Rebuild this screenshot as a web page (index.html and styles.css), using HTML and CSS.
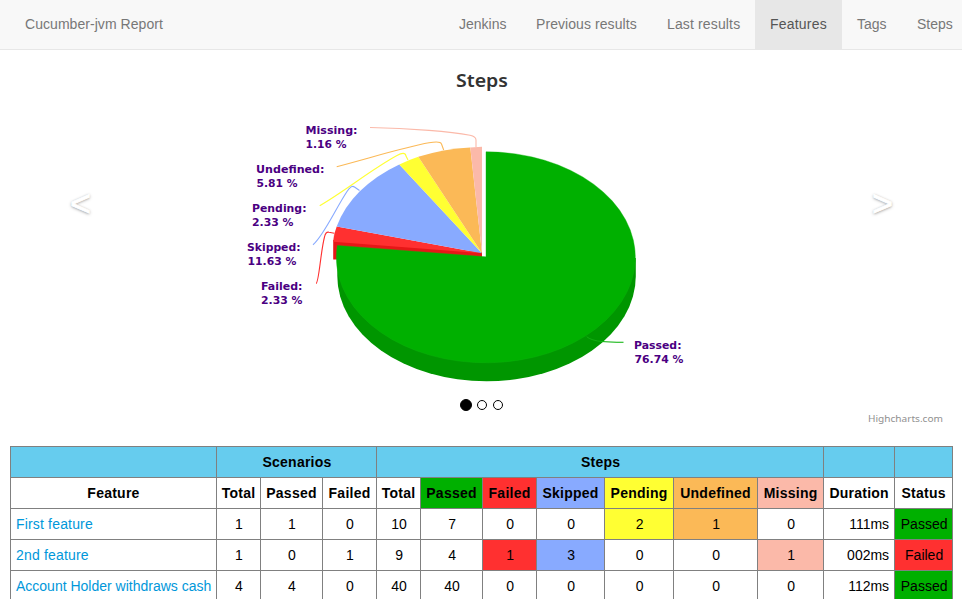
FILE: index.html
```html
<!DOCTYPE html>
<html lang="en">
<head>
<meta charset="utf-8">
<title>Cucumber-jvm Report</title>
<link rel="stylesheet" href="styles.css">
</head>
<body>
<nav class="navbar">
  <a class="brand">Cucumber-jvm Report</a>
  <div class="links">
    <a class="jenkins">Jenkins</a><a class="previous">Previous results</a><a class="last">Last results</a><a class="features active">Features</a><a class="tags">Tags</a><a>Steps</a>
  </div>
</nav>
<section class="carousel">
  <svg class="chart" viewBox="0 50 962 386" width="962" height="386">
    <text class="title" x="456" y="87" textLength="52" lengthAdjust="spacingAndGlyphs">Steps</text>
    <g>
      <path fill="#e61717" d="M333.2 234V259.5H345L482 257V252L333.5 240Z"/>
      <path fill="#ff3030" d="M482 253.3L333.3 241.7Q333.7 234 336.7 226.6Z"/>
      <path fill="#88aaff" d="M482 253.3L336.7 226.6A149.5 106 0 0 1 399.3 164.4Z"/>
      <path fill="#ffff33" d="M482 253.3L399.3 164.4A149.5 106 0 0 1 418.3 156.8Z"/>
      <path fill="#fbb957" d="M482 253.3L418.3 156.8A149.5 106 0 0 1 470.3 147.4Z"/>
      <path fill="#fbb9a9" d="M482 253.3L470.3 147.4L482 146.8Z"/>
      <path fill="#009600" d="M337.3 258V276A149.25 105.3 0 0 0 635.8 276V258Z"/>
      <path fill="#00b000" stroke="#0cb40c" stroke-width=".4" d="M486 256.8L337.3 245.4A149.5 105.5 0 1 0 486 151.8Z"/>
    </g>
    <g class="connectors">
      <path stroke="#fbb9a9" d="M370 127.5C412 128 452 132 470 135.2Q476 136.5 476 140V147"/>
      <path stroke="#fbb957" d="M336.7 166.7C370 158 405 147 429 142.8Q440.5 140.8 441.5 144L443.7 150"/>
      <path stroke="#ffff33" d="M319.7 205.7C345 191 372 169 397 155.5Q405 151 406 156L408 160"/>
      <path stroke="#88aaff" d="M313 244.7C323 237 336 208 347 191.5Q351.5 184.5 354.5 187L359.5 190.5"/>
      <path stroke="#ff3030" d="M316 283.5C319 283 320.5 252 324.5 237Q325.6 231.4 329 232.2L334.3 233.3"/>
      <path stroke="#00b000" d="M623.5 342.3Q609 342.3 601 341.5"/>
      <path stroke="#1ab81a" stroke-width=".7" d="M603 341.7Q591 340.5 586.7 336.7"/>
    </g>
    <g class="labels">
      <text x="305.5" y="134" textLength="52" lengthAdjust="spacingAndGlyphs">Missing:</text><text x="305.5" y="148" textLength="41" lengthAdjust="spacingAndGlyphs">1.16 %</text>
      <text x="256" y="173" textLength="68.500" lengthAdjust="spacingAndGlyphs">Undefined:</text><text x="256.5" y="187" textLength="41" lengthAdjust="spacingAndGlyphs">5.81 %</text>
      <text x="252" y="212" textLength="54.500" lengthAdjust="spacingAndGlyphs">Pending:</text><text x="252" y="226" textLength="41.500" lengthAdjust="spacingAndGlyphs">2.33 %</text>
      <text x="247" y="251" textLength="53.500" lengthAdjust="spacingAndGlyphs">Skipped:</text><text x="247.500" y="265" textLength="49" lengthAdjust="spacingAndGlyphs">11.63 %</text>
      <text x="261" y="290" textLength="41.500" lengthAdjust="spacingAndGlyphs">Failed:</text><text x="261" y="304" textLength="41.500" lengthAdjust="spacingAndGlyphs">2.33 %</text>
      <text x="634" y="349" textLength="47.500" lengthAdjust="spacingAndGlyphs">Passed:</text><text x="634.500" y="363" textLength="49" lengthAdjust="spacingAndGlyphs">76.74 %</text>
    </g>
    <text class="credits" x="868" y="422" textLength="75" lengthAdjust="spacingAndGlyphs">Highcharts.com</text>
  </svg>
  <a class="control prev">&lt;</a>
  <a class="control next">&gt;</a>
  <div class="indicators"><i class="on"></i><i></i><i></i></div>
</section>
<table class="stats">
  <colgroup><col class="w206"><col class="w44"><col class="w62"><col class="w54"><col class="w44"><col class="w62"><col class="w54"><col class="w68"><col class="w69"><col class="w84"><col class="w66"><col class="w71"><col class="w58"></colgroup>
  <thead>
    <tr class="groups"><th></th><th colspan="3">Scenarios</th><th colspan="7">Steps</th><th></th><th></th></tr>
    <tr><th>Feature</th><th>Total</th><th>Passed</th><th>Failed</th><th>Total</th><th class="passed">Passed</th><th class="failed">Failed</th><th class="skipped">Skipped</th><th class="pending">Pending</th><th class="undefined">Undefined</th><th class="missing">Missing</th><th>Duration</th><th>Status</th></tr>
  </thead>
  <tbody>
    <tr><td class="name spaced"><a>First feature</a></td><td>1</td><td>1</td><td>0</td><td>10</td><td>7</td><td>0</td><td>0</td><td class="pending">2</td><td class="undefined">1</td><td>0</td><td class="duration">111ms</td><td class="passed">Passed</td></tr>
    <tr><td class="name spaced"><a>2nd feature</a></td><td>1</td><td>0</td><td>1</td><td>9</td><td>4</td><td class="failed">1</td><td class="skipped">3</td><td>0</td><td>0</td><td class="missing">1</td><td class="duration">002ms</td><td class="failed">Failed</td></tr>
    <tr><td class="name"><a>Account Holder withdraws cash</a></td><td>4</td><td>4</td><td>0</td><td>40</td><td>40</td><td>0</td><td>0</td><td>0</td><td>0</td><td>0</td><td class="duration">112ms</td><td class="passed">Passed</td></tr>
  </tbody>
</table>
</body>
</html>
```
FILE: styles.css
```css
* { box-sizing: border-box; }
html, body { height: 599px; overflow: hidden; }
body {
  margin: 0;
  background: #fff;
  font: 14px/20px "Liberation Sans", Arial, sans-serif;
  color: #000;
}
.navbar {
  display: flex;
  justify-content: space-between;
  height: 50px;
  padding-left: 25px;
  background: #f8f8f8;
  border-bottom: 1px solid #e7e7e7;
  color: #777;
}
.brand { padding: 14px 0; letter-spacing: .05px; }
.links { display: flex; margin-right: -6px; }
.links a { padding: 14px 0 15px 15px; width: 66px; white-space: nowrap; flex: none; }
.links .jenkins { width: 77px; }
.links .previous { width: 131px; letter-spacing: .07px; }
.links .last { width: 103px; letter-spacing: .14px; }
.links .features { width: 87px; letter-spacing: .2px; }
.links .tags { width: 60px; }
.links .active { background: #e7e7e7; color: #555; }

.carousel { position: relative; height: 386px; }
.chart { display: block; }
.chart text { font-family: "Noto Sans", sans-serif; }
.chart .title { font-size: 18px; font-weight: 600; fill: #333; }
.labels text { font-family: "DejaVu Sans", sans-serif; font-size: 11px; font-weight: 700; fill: #4b0082; }
.chart .credits { font-size: 9px; fill: #909090; }
.connectors { fill: none; stroke-width: 1.1; }
.control {
  position: absolute;
  top: 134px;
  font-size: 36px;
  line-height: 40px;
  color: #fff;
  -webkit-text-stroke: .8px #fff;
  text-shadow: 0 1px 3px rgba(0, 0, 0, .8), 0 0 2px rgba(0, 0, 0, .3);
  opacity: .5;
}
.prev { left: 70px; }
.next { right: 69px; }
.indicators {
  position: absolute;
  top: 349px;
  left: 460px;
  display: flex;
  align-items: center;
  gap: 6px;
}
.indicators i { width: 10px; height: 10px; border: 1px solid #000; border-radius: 50%; }
.indicators .on { width: 12px; height: 12px; margin-right: -1px; background: #000; }

.stats {
  width: 943px;
  margin: 10px 0 0 10px;
  border-collapse: collapse;
  table-layout: fixed;
}
.w206 { width: 206px; }
.w44 { width: 44px; }
.w62 { width: 62px; }
.w54 { width: 54px; }
.w68 { width: 68px; }
.w69 { width: 69px; }
.w84 { width: 84px; }
.w66 { width: 66px; }
.w71 { width: 71px; }
.w58 { width: 58px; }
.stats th, .stats td {
  height: 31px;
  padding: 5px 0 5px 1px;
  border: 1px solid gray;
  text-align: center;
  white-space: nowrap;
}
.stats th { padding-left: 0; letter-spacing: .24px; }
.stats .groups th { padding-left: 1px; background: #66ccee; }
.stats .name { padding-left: 5px; text-align: left; color: #0097da; }
.stats .spaced { letter-spacing: .17px; }
.stats .duration { padding-right: 5px; text-align: right; }
.passed { background: #00b000; }
.failed { background: #ff3030; }
.skipped { background: #88aaff; }
.pending { background: #ffff33; }
.undefined { background: #fbb957; }
.missing { background: #fbb9a9; }
```
